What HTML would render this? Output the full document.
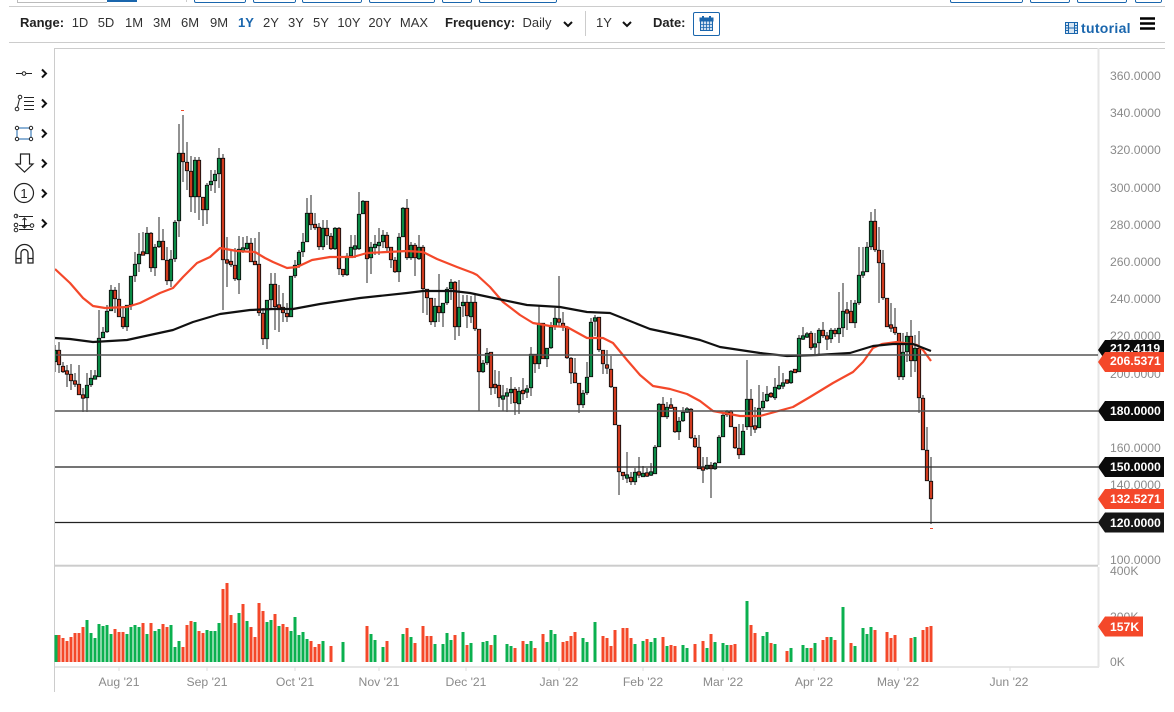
<!DOCTYPE html>
<html><head><meta charset="utf-8"><title>Chart</title>
<style>
html,body{margin:0;padding:0;background:#fff;width:1174px;height:712px;overflow:hidden}
svg{display:block;position:absolute;left:0;top:0;filter:blur(.35px)}
text{font-family:"Liberation Sans",sans-serif}
.t{font-size:13px;fill:#333;text-anchor:middle}
.b{font-size:13px;font-weight:bold;fill:#222}
.y{font-size:12.2px;fill:#8a8a8a}
.x{font-size:12.2px;fill:#8a8a8a;text-anchor:middle}
.w{font-size:12.2px;font-weight:bold;fill:#fff}
</style></head><body>
<svg width="1174" height="712" viewBox="0 0 1174 712" xmlns="http://www.w3.org/2000/svg">
<defs>
<path id="g" d="M55 352V360M87 387V396M91 380V383M95 377.5v0M99 340V375M103 334V336M107 313V330M111 292V309M127 307V325M131 278V303M135 266V274M139 256V262M147 235V252M155 249V266M159 243V245M171 261V279M175 224V257M179 155V219M195 162V195M207 187V208M211 183v0M215 176V179M219 160V172M239 251V278M243 249.5v0M247 245V247M267 302V337M271 286V298M291 278V315M295 267V274M299 254V263M303 244V250M307 215V240M323 230V245M335 230V247M347 258V273M351 249V254M355 247.5v0M359 216V247M363 203V212M371 249V256M375 246v0M379 244v0M383 237V240M399 239V270M403 210V235M411 247V256M419 249V257M435 308V320M443 305V311M447 291V301M451 284V287M459 309V325M463 304v0M471 304V315M483 365V370M487 355V361M503 397.5v0M507 394.5v0M511 391v0M519 393V402M527 390.5v0M531 356V386M539 325V362M547 350V357M551 329V346M555 320V325M583 395V403M587 379V391M591 324V375M595 319.5v0M627 476.5v0M635 474V480M643 475v0M651 473.5v0M655 449V472M659 406V445M667 409V415M679 423V430M683 414V419M687 410.5v0M707 467v0M715 465V467M719 439V461M723 417V435M727 413v0M743 433V453M747 401V425M759 410V426M763 403V406M767 396V399M775 389V396M779 387v0M783 384.5v0M791 373V381M799 340V370M803 337.5v0M807 335.5v0M815 345.5v0M819 332V341M831 332V337M839 330V332M843 313V326M855 305V321M859 277V301M863 273.5v0M867 249V270M871 223V245M903 354V375M907 338V350M915 350V359"/>
<path id="r" d="M59 352V363M63 368V370M67 372.5v0M71 376V379M75 382.5v0M79 386V393M83 396.5v0M115 292V297M119 301V315M123 319V325M143 253.5v0M151 235V266M163 243V258M167 262V279M183 155V160M187 164V169M191 173V195M199 162V195M203 199V208M223 160V258M227 261.5v0M231 263v0M235 267V277M251 245V260M255 263v0M259 266V311M263 315V337M275 286V305M279 306.5v0M283 309V311M287 315v0M311 215V223M315 226v0M319 229V245M327 230V234M331 238V247M339 230V267M343 271V273M367 203V257M387 237V246M391 249V258M395 262V270M407 210V256M415 247V256M423 249V287M427 291V296M431 300V320M439 308V311M455 284V325M467 304V314M475 304V327M479 331V370M491 354V386M495 386v0M499 387V396M515 391V401M523 392v0M535 356V362M543 325V357M559 320.5v0M563 325v0M567 329V356M571 360V371M575 375V381M579 385V403M599 319V348M603 352V362M607 366.5v0M611 371V385M615 389V423M619 427V470M623 474v0M631 479V480M639 473.5v0M647 474.5v0M663 406V415M671 406.5v0M675 409V430M691 411V436M695 440V445M699 449V467M703 468.5v0M711 467v0M731 413V425M735 429V446M739 450V453M751 401V425M755 427.5v0M771 395v0M787 381.5v0M795 371v0M811 335V346M823 332V334M827 337.5v0M835 332v0M847 311.5v0M851 313V321M875 223V248M879 252V261M883 265V296M887 300V325M891 326.5v0M895 329V331M899 335V375M911 338V359M919 350V396M923 400V448M927 452V479M931 483V497"/>
<clipPath id="pl"><rect x="55" y="48" width="1043" height="517"/></clipPath>
<clipPath id="vl"><rect x="1100" y="566.5" width="74" height="110"/></clipPath>
</defs>

<!-- top partial controls -->
<g fill="none" stroke-width="1">
<path d="M17.5 0V2.5H107" stroke="#bbb"/>
<rect x="107" y="-1" width="30" height="3" fill="#1a66ad" stroke="none"/>
<path d="M186.5 0V2" stroke="#ccc"/>
<path d="M194.5 0V1a1.5 1.5 0 0 0 1.5 1.5H244a1.5 1.5 0 0 0 1.5-1.5V0M253.5 0V1a1.5 1.5 0 0 0 1.5 1.5H294a1.5 1.5 0 0 0 1.5-1.5V0M302.5 0V1a1.5 1.5 0 0 0 1.5 1.5H360a1.5 1.5 0 0 0 1.5-1.5V0M369.5 0V1a1.5 1.5 0 0 0 1.5 1.5H433a1.5 1.5 0 0 0 1.5-1.5V0M442.5 0V1a1.5 1.5 0 0 0 1.5 1.5H470a1.5 1.5 0 0 0 1.5-1.5V0M479.5 0V1a1.5 1.5 0 0 0 1.5 1.5H555a1.5 1.5 0 0 0 1.5-1.5V0M950.5 0V1a1.5 1.5 0 0 0 1.5 1.5H1021a1.5 1.5 0 0 0 1.5-1.5V0M1030.5 0V1a1.5 1.5 0 0 0 1.5 1.5H1068a1.5 1.5 0 0 0 1.5-1.5V0M1077.5 0V1a1.5 1.5 0 0 0 1.5 1.5H1125a1.5 1.5 0 0 0 1.5-1.5V0M1135.5 0V1a1.5 1.5 0 0 0 1.5 1.5H1160a1.5 1.5 0 0 0 1.5-1.5V0" stroke="#1a66ad"/>
</g>
<rect x="9" y="6" width="1156" height="1" fill="#ccc"/>
<rect x="9" y="42" width="1156" height="1" fill="#ccc"/>
<rect x="54" y="48" width="1111" height="1" fill="#ccc"/>

<!-- toolbar -->
<text class="b" x="20" y="27">Range:</text>
<text class="t" x="80" y="27">1D</text>
<text class="t" x="106" y="27">5D</text>
<text class="t" x="134" y="27">1M</text>
<text class="t" x="162" y="27">3M</text>
<text class="t" x="190" y="27">6M</text>
<text class="t" x="219" y="27">9M</text>
<text class="t" x="246" y="27" style="fill:#1a66ad;font-weight:bold">1Y</text>
<text class="t" x="271" y="27">2Y</text>
<text class="t" x="296" y="27">3Y</text>
<text class="t" x="321" y="27">5Y</text>
<text class="t" x="349" y="27">10Y</text>
<text class="t" x="380" y="27">20Y</text>
<text class="t" x="414" y="27">MAX</text>
<text class="b" x="445" y="27">Frequency:</text>
<text class="t" x="537" y="27">Daily</text>
<path d="M564 22l4 4 4-4M623 22l4 4 4-4" fill="none" stroke="#111" stroke-width="2"/>
<rect x="585" y="11" width="1" height="25" fill="#ccc"/>
<text class="t" x="604" y="27">1Y</text>
<text class="b" x="653" y="27">Date:</text>
<rect x="693.5" y="12.5" width="26" height="23" rx="1.5" fill="#fff" stroke="#1a66ad"/>
<g fill="none" stroke="#1a66ad">
<rect x="700.5" y="18.5" width="12" height="12" fill="#cfe0f0"/>
<path d="M700 18h13v3h-13z" fill="#1a66ad"/>
<path d="M703.5 21v9M706.5 21v9M709.5 21v9M700.5 24.5h12M700.5 27.5h12" stroke-width=".8"/>
<path d="M703 16v3M710 16v3" stroke-width="2"/>
</g>
<!-- tutorial -->
<g fill="none" stroke="#1a66ad">
<rect x="1065.5" y="22.5" width="12" height="11" fill="#d9e6f2"/>
<path d="M1068.5 22.5v11M1074.5 22.5v11M1068.5 28h6M1065.5 25.5h3M1065.5 28h3M1065.5 30.5h3M1074.5 25.5h3M1074.5 28h3M1074.5 30.5h3"/>
</g>
<text x="1081" y="33" style="font-size:14px;font-weight:bold;fill:#1a66ad;letter-spacing:.3px">tutorial</text>
<path d="M1140 18.5h15M1140 23.5h15M1140 28.5h15" stroke="#000" stroke-width="2.4"/>

<!-- left tools -->
<g fill="none" stroke="#222" stroke-width="1">
<path d="M16 73.5h6M26 73.5h6"/><circle cx="24" cy="73.5" r="1.8"/>
<circle cx="20" cy="97" r="1.8"/><circle cx="17" cy="109" r="1.8"/><path d="M19.5 99l-2 8M24 97.5h10M24 101.5h10M24 105.5h10M24 109.5h10"/>
<rect x="17" y="128" width="14" height="11" stroke="#1a66ad"/>
<circle cx="17" cy="128" r="1.7" fill="#fff"/><circle cx="31" cy="128" r="1.7" fill="#fff"/><circle cx="17" cy="139" r="1.7" fill="#fff"/><circle cx="31" cy="139" r="1.7" fill="#fff"/>
<path d="M20.5 154h9v10h3.5l-8.500 8-8.500-8h4.500z" stroke-width="1.200"/>
<circle cx="24" cy="193" r="9.500" stroke-width="1.200"/>
<path d="M16 216h1M19 216.500h14M19 229.500h14M24.500 218v10M22.500 220l2-2 2 2M22.500 226l2 2 2-2M19 225.500h11"/>
<circle cx="16" cy="216" r="1.800"/><circle cx="16" cy="225" r="1.800"/><circle cx="16" cy="230" r="1.800"/><circle cx="32" cy="225.500" r="1.800"/>
<path d="M16 263v-10a8.500 8.500 0 0 1 17 0v10h-5v-10a3.500 3.500 0 0 0-7 0v10zM16 258.500h5M28 258.500h5" stroke-width="1.300"/>
</g>
<text x="24" y="198" style="font-size:13px;fill:#222;text-anchor:middle">1</text>
<path d="M42 69.500l4 4-4 4M42 99.500l4 4-4 4M42 129.500l4 4-4 4M42 159.500l4 4-4 4M42 189.500l4 4-4 4M42 219.500l4 4-4 4" fill="none" stroke="#111" stroke-width="2"/>

<!-- y labels -->
<g class="yl">
<text class="y" x="1110" y="80">360.0000</text>
<text class="y" x="1110" y="117">340.0000</text>
<text class="y" x="1110" y="154">320.0000</text>
<text class="y" x="1110" y="192">300.0000</text>
<text class="y" x="1110" y="229">280.0000</text>
<text class="y" x="1110" y="266">260.0000</text>
<text class="y" x="1110" y="303">240.0000</text>
<text class="y" x="1110" y="340">220.0000</text>
<text class="y" x="1110" y="378">200.0000</text>
<text class="y" x="1110" y="452">160.0000</text>
<text class="y" x="1110" y="489">140.0000</text>
<text class="y" x="1110" y="564">100.0000</text>
</g>
<g clip-path="url(#vl)">
<text class="y" x="1110" y="575">400K</text>
<text class="y" x="1110" y="621">200K</text>
<text class="y" x="1110" y="666">0K</text>
</g>

<!-- axes -->
<rect x="54" y="48" width="1" height="644" fill="#ccc"/>
<rect x="1097.500" y="48" width="2" height="517" fill="#e6e6e6"/>
<rect x="1097.500" y="567" width="2" height="100" fill="#e6e6e6"/>
<rect x="55" y="564.700" width="1043" height="2" fill="#ccc"/>
<rect x="55" y="666" width="1044" height="2" fill="#e6e6e6"/>
<path d="M119 667v4M207 667v4M295 667v4M379 667v4M466 667v4M559 667v4M643 667v4M723 667v4M814 667v4M898 667v4M1010 667v4" stroke="#ddd" stroke-width="1"/>
<text class="x" x="119" y="686">Aug '21</text>
<text class="x" x="207" y="686">Sep '21</text>
<text class="x" x="295" y="686">Oct '21</text>
<text class="x" x="379" y="686">Nov '21</text>
<text class="x" x="466" y="686">Dec '21</text>
<text class="x" x="559" y="686">Jan '22</text>
<text class="x" x="643" y="686">Feb '22</text>
<text class="x" x="723" y="686">Mar '22</text>
<text class="x" x="814" y="686">Apr '22</text>
<text class="x" x="898" y="686">May '22</text>
<text class="x" x="1009" y="686">Jun '22</text>

<!-- candles -->
<g clip-path="url(#pl)" fill="none">
<path stroke="#777" stroke-width="1.600" d="M55 345V372M59 342V373M63 362V373M67 365V387M71 364V390M75 373V387M79 365V395M83 388V412M87 373V412M91 370V387M95 370V378M99 310V377M103 327V338M107 305V333M111 285V311M115 287V313M119 283V317M123 307V329M127 305V331M131 276V310M135 252V282M139 233V272M143 232V254M147 227V254M151 232V272M155 244V276M159 217V248M163 229V260M167 247V285M171 250V287M175 220V262M179 124V237M183 115V182M187 142V190M191 156V212M195 157V213M199 157V220M203 197V226M207 183V224M211 170V191M215 170V193M219 148V188M223 154V310M227 237V287M231 250V267M235 248V281M239 236V294M243 237V253M247 236V250M251 238V262M255 238V265M259 232V316M263 308V345M267 300V349M271 273V310M275 273V330M279 285V332M283 293V322M287 303V322M291 276V317M295 260V278M299 250V268M303 233V257M307 198V242M311 195V230M315 213V230M319 223V250M323 220V250M327 220V245M331 233V250M335 227V250M339 227V275M343 269V277M347 253V276M351 235V258M355 235V258M359 192V250M363 200V214M367 201V283M371 242V274M375 235V255M379 228V255M383 230V248M387 232V253M391 247V268M395 257V273M399 233V282M403 207V237M407 199V260M411 242V260M415 243V276M419 235V260M423 245V313M427 289V315M431 298V325M435 298V327M439 274V322M443 303V327M447 287V305M451 279V300M455 281V340M459 280V336M463 295V317M467 295V328M471 296V323M475 293V331M479 329V411M483 360V373M487 348V365M491 352V395M495 370V394M499 371V407M503 385V411M507 388V412M511 377V404M515 387V415M519 387V414M523 378V400M527 385V398M531 347V396M535 354V373M539 306V369M543 323V359M547 348V367M551 322V349M555 308V330M559 276V327M563 312V331M567 326V359M571 357V384M575 358V383M579 383V413M583 390V408M587 362V395M591 318V377M595 315V336M599 317V352M603 350V374M607 350V374M611 356V388M615 387V425M619 425V495M623 472V480M627 452V483M631 472V485M635 468V485M639 457V478M643 466V477M647 468V477M651 463V476M655 445V474M659 403V447M663 397V417M667 402V419M671 398V409M675 407V433M679 417V440M683 407V422M687 407V413M691 408V439M695 435V448M699 435V469M703 457V483M707 457V470M711 462V498M715 462V470M719 435V463M723 412V437M727 410V417M731 410V427M735 427V449M739 424V459M743 424V455M747 360V430M751 389V436M755 407V433M759 385V428M763 392V410M767 386V402M771 392V398M775 378V400M779 366V390M783 373V389M787 381V384M791 370V384M795 370V373M799 335V372M803 327V340M807 332V338M811 331V350M815 333V355M819 328V354M823 322V338M827 332V350M831 328V343M835 328V337M839 292V343M843 283V337M847 302V330M851 300V323M855 300V328M859 247V305M863 247V278M867 242V272M871 212V250M875 209V252M879 227V303M883 250V300M887 298V327M891 303V332M895 308V335M899 333V380M903 333V380M907 332V362M911 320V377M915 335V372M919 331V413M923 395V450M927 427V481M931 457V524"/>
<use href="#g" stroke="#0c0c0c" stroke-width="4.200" stroke-linecap="square"/>
<use href="#r" stroke="#0c0c0c" stroke-width="4.200" stroke-linecap="square"/>
<use href="#g" stroke="#0a8a45" stroke-width="2.400" stroke-linecap="square"/>
<use href="#r" stroke="#cf3a1e" stroke-width="2.400" stroke-linecap="square"/>
<!-- MAs -->
<path stroke="#f4482a" stroke-width="2.200" stroke-linejoin="round" d="M55 269L70 283L83 298L93 306L105 308L127 307L140 303L160 293L173 288L183 277L197 263L210 257L220 248L237 251L255 252L265 258L273 262L287 268L297 267L312 260L330 257L353 257L367 253L387 252L407 251L423 252L437 259L457 267L473 273L477 275L490 287L503 302L520 315L533 323L550 326L567 327L587 338L603 338L613 343L627 360L640 375L653 386L670 389L687 394L700 401L713 411L740 416L760 416L793 407L810 397L833 383L853 372L863 362L873 348L882 344L897 342L917 345L923 350L931 361"/>
<path stroke="#111" stroke-width="2.200" stroke-linejoin="round" d="M55 338L70 339L93 342L127 340L150 335L173 330L193 322L220 314L250 310L273 309L293 309L320 304L360 298L407 293L423 291L453 291L470 293L503 300L527 305L560 307L587 312L610 313L650 329L683 336L700 340L720 347L760 353L787 356L817 355L850 353L873 346L893 344L913 344L931 351"/>
<!-- levels -->
<path stroke="#555" stroke-width="1.400" d="M55 355H1098M55 411H1098"/>
<path stroke="#222" stroke-width="1.200" d="M55 467H1098M55 522.500H1098"/>
<path stroke="#f4482a" stroke-width="1" d="M181 110.500h3M930 528.500h3"/>
</g>

<!-- volume -->
<g fill="none" stroke-width="3">
<path stroke="#0bb04f" d="M56 635V662M87 620V662M91 633V662M95 638V662M99 624V662M103 626V662M107 625V662M111 634V662M127 634V662M131 627V662M135 625V662M139 627V662M147 634V662M155 631V662M159 629V662M171 625V662M175 647V662M179 641V662M195 622V662M207 630V662M211 631V662M215 631V662M219 623V662M239 613V662M247 621V662M267 622V662M271 620V662M279 626V662M291 631V662M295 617V662M299 635V662M303 632V662M307 639V662M323 641V662M343 642V662M371 634V662M375 640V662M383 647V662M403 634V662M411 637V662M435 644V662M443 644V662M447 633V662M451 640V662M463 632V662M471 643V662M483 642V662M487 641V662M495 635V662M507 644V662M511 646V662M527 644V662M531 641V662M547 642V662M551 630V662M555 634V662M583 638V662M587 642V662M595 622V662M635 644V662M643 641V662M651 642V662M655 638V662M667 646V662M683 645V662M687 648V662M707 648V662M715 642V662M723 643V662M727 645V662M747 601V662M763 636V662M767 632V662M775 644V662M791 648V662M803 645V662M807 648V662M815 643V662M831 637V662M843 607V662M855 646V662M863 628V662M867 634V662M871 627V662M915 637V662"/>
<path stroke="#f4482a" d="M59 635V662M63 638V662M67 641V662M71 637V662M75 633V662M79 633V662M83 627V662M115 629V662M119 632V662M123 632V662M143 623V662M151 623V662M163 624V662M167 627V662M183 647V662M187 625V662M191 621V662M199 631V662M203 633V662M223 589V662M227 583V662M231 615V662M235 623V662M243 604V662M251 627V662M255 637V662M259 603V662M263 611V662M275 614V662M283 624V662M287 627V662M311 641V662M315 647V662M319 644V662M331 646V662M367 626V662M387 641V662M407 628V662M415 643V662M423 626V662M427 636V662M431 636V662M455 635V662M467 645V662M491 645V662M515 648V662M523 641V662M535 648V662M543 634V662M563 642V662M567 641V662M571 636V662M575 632V662M603 636V662M607 638V662M611 646V662M615 630V662M623 628V662M627 628V662M631 638V662M647 639V662M663 637V662M671 645V662M675 646V662M695 644V662M703 641V662M711 634V662M731 645V662M735 644V662M751 625V662M755 633V662M771 643V662M787 651V662M811 648V662M823 640V662M827 637V662M835 640V662M851 643V662M875 630V662M887 632V662M891 638V662M895 635V662M911 638V662M923 630V662M927 627V662M931 626V662"/>
</g>

<!-- tags -->
<path fill="#0a0a0a" d="M1098 350l7-10h59v20h-59z"/>
<text class="w" x="1110" y="352.500">212.4119</text>
<path fill="#f4482a" d="M1098 362l7-10h59v20h-59z"/>
<text class="w" x="1110" y="365">206.5371</text>
<path fill="#0a0a0a" d="M1098 411l7-10h59v20h-59z"/>
<text class="w" x="1110" y="415">180.0000</text>
<path fill="#0a0a0a" d="M1098 467l7-10h59v20h-59z"/>
<text class="w" x="1110" y="471">150.0000</text>
<path fill="#f4482a" d="M1098 499l7-10h59v20h-59z"/>
<text class="w" x="1110" y="503">132.5271</text>
<path fill="#161616" d="M1098 522.500l7-10h59v20h-59z"/>
<text class="w" x="1110" y="527">120.0000</text>
<path fill="#f4482a" d="M1098 626.500l7-10h38v20h-38z"/>
<text class="w" x="1110" y="631">157K</text>
</svg>
</body></html>
